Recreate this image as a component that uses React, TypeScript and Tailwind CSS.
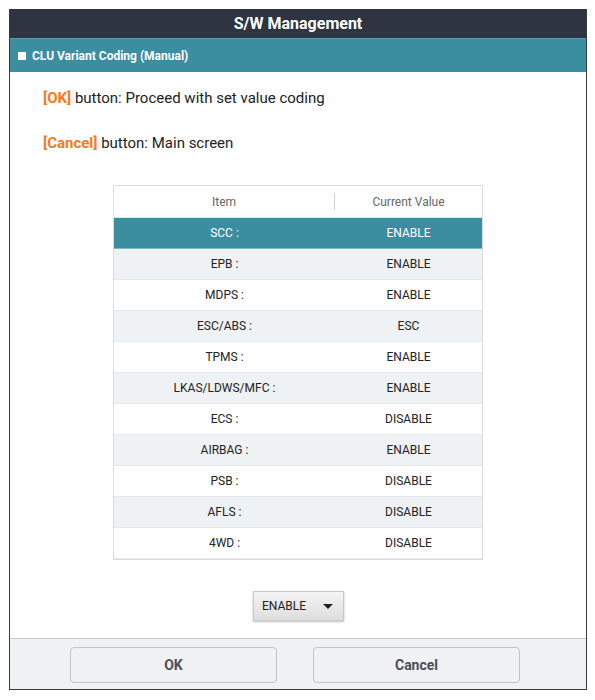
const rows: [string, string][] = [
  ["SCC :", "ENABLE"],
  ["EPB :", "ENABLE"],
  ["MDPS :", "ENABLE"],
  ["ESC/ABS :", "ESC"],
  ["TPMS :", "ENABLE"],
  ["LKAS/LDWS/MFC :", "ENABLE"],
  ["ECS :", "DISABLE"],
  ["AIRBAG :", "ENABLE"],
  ["PSB :", "DISABLE"],
  ["AFLS :", "DISABLE"],
  ["4WD :", "DISABLE"],
];

export default function App() {
  return (
    <div
      className="h-[700px] w-[595px] bg-white pl-[9px] pt-[9px]"
      style={{ fontFamily: "Roboto, 'Liberation Sans', sans-serif" }}
    >
      <div className="flex h-[681px] w-[578px] flex-col border border-[#3a3a3a] border-t-0">
        {/* title bar */}
        <div className="flex h-[29px] items-center justify-center bg-[#2e3440] text-[16px] font-bold text-white">
          S/W Management
        </div>
        {/* section header */}
        <div className="flex h-[34px] items-center gap-[6px] border-t border-[#5a9aa8] bg-[#3a8e9f] pl-[8px] text-[12px] font-bold text-white">
          <span className="h-[8px] w-[8px] bg-white" />
          CLU Variant Coding (Manual)
        </div>

        <div className="flex flex-1 flex-col">
          <div className="pl-[33px] pt-[16px] text-[15px] leading-[20px] text-[#222]">
            <p>
              <span className="font-bold text-[#f47a20]">[OK]</span> button: Proceed with set value coding
            </p>
            <p className="mt-[25px]">
              <span className="font-bold text-[#f47a20]">[Cancel]</span> button: Main screen
            </p>
          </div>

          {/* table */}
          <div className="ml-[103px] mt-[32px] w-[370px] border border-[#dcdcdc] text-[12px] text-[#222]">
            <div className="flex h-[32px] items-center border-b border-[#e2e2e2] text-[#666]">
              <div className="flex w-[220px] justify-center">Item</div>
              <div className="h-[17px] w-px bg-[#cfcfcf]" />
              <div className="flex flex-1 justify-center">Current Value</div>
            </div>
            {rows.map(([item, value], i) => (
              <div
                key={item}
                className={
                  i === 0
                    ? "flex h-[31px] items-center border-b border-[#7fb8c3] bg-[#3a8e9f] text-white"
                    : i % 2 === 1
                      ? "flex h-[31px] items-center border-b border-[#e6e9eb] bg-[#eff2f4]"
                      : "flex h-[31px] items-center border-b border-[#e6e9eb] bg-white"
                }
              >
                <div className="flex w-[221px] justify-center">{item}</div>
                <div className="flex flex-1 justify-center">{value}</div>
              </div>
            ))}
          </div>

          {/* dropdown */}
          <div className="mt-[31px] flex justify-center pl-[1px]">
            <button
              type="button"
              className="flex h-[30px] w-[91px] items-center justify-between border border-[#c8c8c8] bg-gradient-to-b from-[#f4f4f4] to-[#dedede] pl-[8px] pr-[10px] text-[12px] text-[#222] shadow-[0_1px_2px_rgba(0,0,0,0.25)]"
            >
              ENABLE
              <span className="h-0 w-0 border-x-[5px] border-t-[5px] border-x-transparent border-t-[#222]" />
            </button>
          </div>
        </div>

        {/* footer */}
        <div className="flex h-[51px] gap-[36px] border-t border-[#c9cbcf] bg-[#f0f1f3] pl-[60px] pt-[8px]">
          <button
            type="button"
            className="h-[36px] w-[207px] rounded-[4px] border border-[#c2c4c8] bg-[#f0f1f3] text-[14px] font-bold text-[#4a4f57]"
          >
            OK
          </button>
          <button
            type="button"
            className="h-[36px] w-[207px] rounded-[4px] border border-[#c2c4c8] bg-[#f0f1f3] text-[14px] font-bold text-[#4a4f57]"
          >
            Cancel
          </button>
        </div>
      </div>
    </div>
  );
}
